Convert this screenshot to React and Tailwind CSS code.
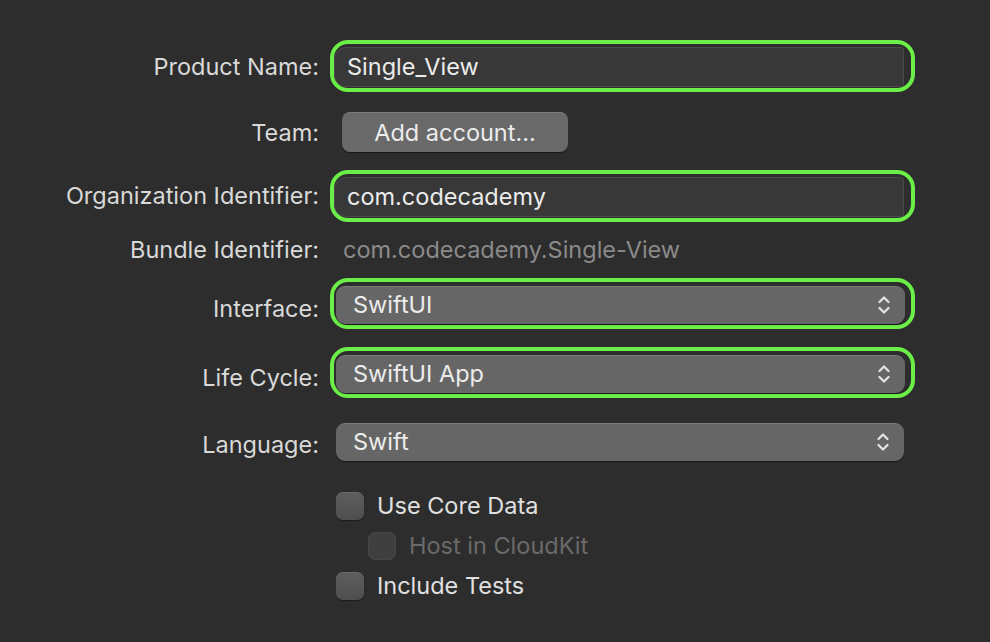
import React from 'react';

const font = { fontFamily: 'Inter, "Noto Sans", sans-serif' };

function Chevrons() {
    return (
        <svg width="14" height="22" viewBox="0 0 14 22" fill="none" stroke="#e4e4e4" strokeWidth="2.2" strokeLinecap="round" strokeLinejoin="round">
            <path d="M2.5 8 L7 3.5 L11.5 8" />
            <path d="M2.5 14 L7 18.5 L11.5 14" />
        </svg>
    );
}

function Label({ children, className = '' }) {
    return <div className={`w-[319px] shrink-0 text-right text-[23.5px] text-[#d9d9d9] ${className}`}>{children}</div>;
}

function Popup({ value }) {
    return (
        <div className="flex items-center justify-between h-[38px] w-full rounded-[9px] bg-[#666666] border-t border-[#7a7a7a] shadow-[0_1px_1px_rgba(0,0,0,0.45)] pl-[17px] pr-[14px]">
            <span className="text-[23.5px] text-[#ececec]">{value}</span>
            <Chevrons />
        </div>
    );
}

function Checkbox({ label, dim, indent }) {
    return (
        <div className={`flex items-center h-[28px] ${indent ? 'ml-[368px]' : 'ml-[336px]'}`}>
            <div className={`w-[28px] h-[28px] rounded-[7px] ${dim ? 'bg-[#3f3f3f] border border-[#474747]' : 'bg-gradient-to-b from-[#5e5e5e] to-[#4e4e4e] border-t border-[#6a6a6a] shadow-[0_1px_1px_rgba(0,0,0,0.4)]'}`} />
            <span className={`ml-[13px] text-[23.5px] ${dim ? 'text-[#6a6a6a]' : 'text-[#e0e0e0]'}`}>{label}</span>
        </div>
    );
}

function Ring({ children, className }) {
    return (
        <div className={`ml-[11px] w-[585px] rounded-[18px] border-[4px] border-[#6bee47] flex items-center ${className}`}>
            {children}
        </div>
    );
}

export default function App() {
    return (
        <div className="w-[990px] h-[642px] bg-[#2d2d2d] overflow-hidden pt-[40px]" style={font}>
            {/* Product Name */}
            <div className="flex items-center h-[52px]">
                <Label className="pt-[2px]">Product Name:</Label>
                <Ring className="h-[52px] pr-[7px] pt-[3px] pb-[1px]">
                    <div className="h-full w-full bg-[#383838] border border-[#4a4a4a] rounded-l-[12px] rounded-r-[3px] flex items-center pl-[12px]">
                        <span className="text-[23.5px] text-[#ececec]">Single_View</span>
                    </div>
                </Ring>
            </div>

            {/* Team */}
            <div className="flex items-center h-[40px] mt-[20px]">
                <Label className="pt-[2px]">Team:</Label>
                <button className="ml-[23px] w-[226px] h-[40px] rounded-[8px] bg-[#696969] border-t border-[#7c7c7c] shadow-[0_1px_1px_rgba(0,0,0,0.45)] text-[23.5px] text-[#ececec]">
                    Add account...
                </button>
            </div>

            {/* Organization Identifier */}
            <div className="flex items-center h-[52px] mt-[18px]">
                <Label>Organization Identifier:</Label>
                <Ring className="h-[52px] pr-[7px] pt-[3px] pb-[1px]">
                    <div className="h-full w-full bg-[#383838] border border-[#4a4a4a] rounded-l-[12px] rounded-r-[3px] flex items-center pl-[12px]">
                        <span className="text-[23.5px] text-[#ececec]">com.codecademy</span>
                    </div>
                </Ring>
            </div>

            {/* Bundle Identifier */}
            <div className="flex items-center h-[40px] mt-[8px]">
                <Label>Bundle Identifier:</Label>
                <span className="ml-[24px] text-[23.5px] text-[#8a8a8a]">com.codecademy.Single-View</span>
            </div>

            {/* Interface */}
            <div className="flex items-center h-[51px] mt-[8px]">
                <Label className="pt-[10px]">Interface:</Label>
                <Ring className="h-[51px] pl-[2px] pr-[6px] pt-[4px] pb-[2px]">
                    <Popup value="SwiftUI" />
                </Ring>
            </div>

            {/* Life Cycle */}
            <div className="flex items-center h-[51px] mt-[18px]">
                <Label className="pt-[10px]">Life Cycle:</Label>
                <Ring className="h-[51px] pl-[2px] pr-[6px] pt-[4px] pb-[2px]">
                    <Popup value="SwiftUI App" />
                </Ring>
            </div>

            {/* Language */}
            <div className="flex items-center h-[39px] mt-[24px]">
                <Label className="pt-[7px]">Language:</Label>
                <div className="ml-[17px] w-[568px]">
                    <Popup value="Swift" />
                </div>
            </div>

            <div className="mt-[31px] flex flex-col gap-[12px]">
                <Checkbox label="Use Core Data" />
                <Checkbox label="Host in CloudKit" dim indent />
                <Checkbox label="Include Tests" />
            </div>
        </div>
    );
}
